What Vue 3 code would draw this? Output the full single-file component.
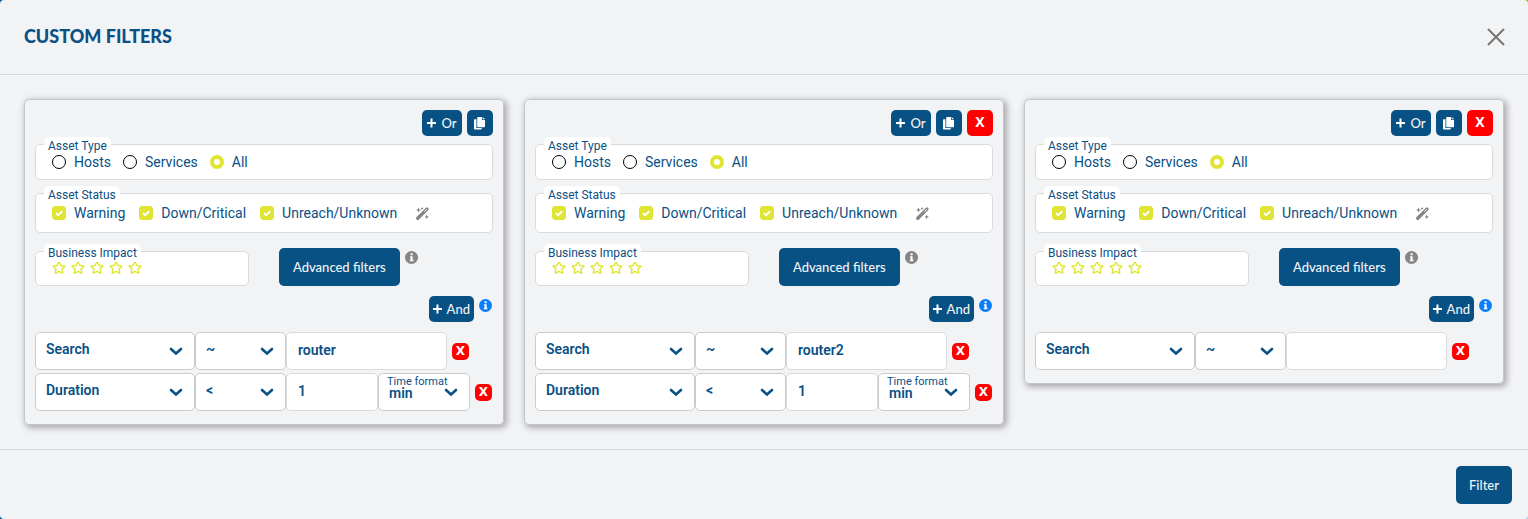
<script setup>
import { reactive } from 'vue'

const makeCard = (id, rows, removable) => ({
  id,
  rows,
  removable,
  assetType: 'All',
  statuses: ['Warning', 'Down/Critical', 'Unreach/Unknown'],
})

const cards = reactive([
  makeCard(1, [
    { field: 'Search', op: '~', value: 'router' },
    { field: 'Duration', op: '<', value: '1', unit: 'min' },
  ], false),
  makeCard(2, [
    { field: 'Search', op: '~', value: 'router2' },
    { field: 'Duration', op: '<', value: '1', unit: 'min' },
  ], true),
  makeCard(3, [{ field: 'Search', op: '~', value: '' }], true),
])

const assetTypes = ['Hosts', 'Services', 'All']
const statuses = ['Warning', 'Down/Critical', 'Unreach/Unknown']
const fields = ['Search', 'Duration']
const operators = ['~', '<', '>', '=']
const units = ['min', 'hour', 'day']

const addRow = (card) => card.rows.push({ field: 'Search', op: '~', value: '' })
</script>

<template>
  <div class="backdrop">
    <section class="modal" role="dialog" aria-labelledby="modal-title">
      <header class="modal-header">
        <h1 id="modal-title">CUSTOM FILTERS</h1>
        <button class="close" type="button" aria-label="Close">
          <svg width="18" height="18" viewBox="0 0 18 18"><path d="M1.5 1.5l15 15M16.5 1.5l-15 15" /></svg>
        </button>
      </header>

      <main class="modal-body">
        <article v-for="card in cards" :key="card.id" class="card">
          <div class="toolbar">
            <button class="btn small" type="button">
              <svg class="plus" width="9" height="10" viewBox="0 0 9 10"><path d="M4.5 0.5v9M0 5h9" /></svg>
              <span>Or</span>
            </button>
            <button class="btn square" type="button" aria-label="Duplicate">
              <svg width="12" height="13" viewBox="0 0 12 13" fill="#fff">
                <path d="M4 0h4v3h3v6.5a.8.8 0 0 1-.8.8H4a.8.8 0 0 1-.8-.8V.8A.8.8 0 0 1 4 0z" />
                <path d="M8.7 0L11 2.3H8.7z" />
                <path d="M.8 2.2h1.6v8.9h5.4v.7a.8.8 0 0 1-.8.8H.8a.8.8 0 0 1-.8-.8V3a.8.8 0 0 1 .8-.8z" />
              </svg>
            </button>
            <button v-if="card.removable" class="btn square danger" type="button">X</button>
          </div>

          <fieldset class="group types">
            <legend>Asset Type</legend>
            <label v-for="type in assetTypes" :key="type" class="choice">
              <input v-model="card.assetType" type="radio" :name="'type-' + card.id" :value="type" />
              <span>{{ type }}</span>
            </label>
          </fieldset>

          <fieldset class="group statuses">
            <legend>Asset Status</legend>
            <label v-for="status in statuses" :key="status" class="choice">
              <span class="tick">
                <input v-model="card.statuses" type="checkbox" :value="status" />
                <svg width="14" height="14" viewBox="0 0 14 14"><path d="M4 7l2.200 2.200L10.200 5.200" /></svg>
              </span>
              <span>{{ status }}</span>
            </label>
            <button class="icon-btn wand" type="button" aria-label="Toggle all">
              <svg width="13" height="13" viewBox="0 0 13 13">
                <path d="M1.800 11.200L10.900 2.100" stroke="#858585" stroke-width="3.400" stroke-linecap="round" />
                <path d="M8.400 4.600L10.700 2.300" stroke="#fff" stroke-width="1" />
                <path d="M2.500.6l.7 1.700 1.700.7-1.700.7-.7 1.700-.7-1.700L.1 3l1.700-.7zM6 0l.5 1 1 .5-1 .5-.5 1-.5-1-1-.5 1-.5zM10.700 7.600l.7 1.600 1.600.7-1.600.7-.7 1.600-.7-1.600-1.600-.7 1.600-.7z" fill="#858585" />
              </svg>
            </button>
          </fieldset>

          <div class="impact-row">
            <fieldset class="group impact">
              <legend>Business Impact</legend>
              <button v-for="n in 5" :key="n" class="icon-btn" type="button" :aria-label="'Impact ' + n">
                <svg width="14" height="13" viewBox="0 0 576 512" fill="#dfe532" stroke="#dfe532" stroke-width="12">
                  <path d="M528.1 171.5L382 150.2 316.7 17.8c-11.7-23.6-45.6-23.9-57.4 0L194 150.2 47.9 171.5c-26.2 3.8-36.7 36.1-17.7 54.6l105.7 103-25 145.5c-4.5 26.3 23.2 46 46.4 33.7L288 439.6l130.7 68.7c23.2 12.2 50.9-7.4 46.4-33.7l-25-145.5 105.7-103c19-18.5 8.5-50.8-17.7-54.6zM388.6 312.3l23.7 138.4L288 385.4l-124.3 65.3 23.7-138.4-100.6-98 139-20.2 62.2-126 62.2 126 139 20.2-100.6 98z" />
                </svg>
              </button>
            </fieldset>
            <button class="btn large" type="button">Advanced filters</button>
            <svg class="info" width="13" height="13" viewBox="0 0 13 13">
              <circle cx="6.500" cy="6.500" r="6.500" fill="#858585" />
              <path d="M5.600 2.300h2v1.900h-2zM5 5.200h2.600v3.600h.8v1.400H4.800V8.800h.8V6.600H5z" fill="#fff" />
            </svg>
          </div>

          <div class="and-row">
            <button class="btn small" type="button" @click="addRow(card)">
              <svg class="plus" width="9" height="10" viewBox="0 0 9 10"><path d="M4.500 0.500v9M0 5h9" /></svg>
              <span>And</span>
            </button>
            <svg class="info" width="13" height="13" viewBox="0 0 13 13">
              <circle cx="6.500" cy="6.500" r="6.500" fill="#0a7dfa" />
              <path d="M5.600 2.300h2v1.900h-2zM5 5.200h2.600v3.600h.8v1.400H4.800V8.800h.8V6.600H5z" fill="#fff" />
            </svg>
          </div>

          <div class="rows">
            <div v-for="(row, i) in card.rows" :key="i" class="row" :class="{ timed: row.unit }">
              <div class="field name">
                <select v-model="row.field" aria-label="Field">
                  <option v-for="f in fields" :key="f">{{ f }}</option>
                </select>
                <svg class="chevron" width="14" height="9" viewBox="0 0 14 9"><path d="M2 2l5 4.500L12 2" /></svg>
              </div>
              <div class="field operator">
                <select v-model="row.op" aria-label="Operator">
                  <option v-for="o in operators" :key="o">{{ o }}</option>
                </select>
                <svg class="chevron" width="14" height="9" viewBox="0 0 14 9"><path d="M2 2l5 4.500L12 2" /></svg>
              </div>
              <div class="field value">
                <input v-model="row.value" type="text" aria-label="Value" />
              </div>
              <div v-if="row.unit" class="field unit">
                <label :for="'unit-' + card.id + '-' + i">Time format</label>
                <select :id="'unit-' + card.id + '-' + i" v-model="row.unit">
                  <option v-for="u in units" :key="u">{{ u }}</option>
                </select>
                <svg class="chevron" width="14" height="9" viewBox="0 0 14 9"><path d="M2 2l5 4.500L12 2" /></svg>
              </div>
              <button class="remove" type="button">X</button>
            </div>
          </div>
        </article>
      </main>

      <footer class="modal-footer">
        <button class="btn large" type="button">Filter</button>
      </footer>
    </section>
  </div>
</template>

<style>
body {
  background: #f2f3f5;
}
</style>

<style scoped>
* {
  box-sizing: border-box;
}
.backdrop {
  background:
    linear-gradient(#9db53c 50%, #a9cbe2 50%) right / 50% 100% no-repeat,
    #00508a;
}
.modal {
  background: #f2f3f5;
  border-radius: 4px;
  color: #0a5085;
  font: 14px/18px Roboto, sans-serif;
}
button,
input,
select {
  font: inherit;
  color: inherit;
  margin: 0;
}
button {
  border: 0;
  padding: 0;
  cursor: pointer;
}
svg {
  display: block;
  flex: none;
}
.modal-header {
  display: flex;
  align-items: center;
  justify-content: space-between;
  height: 75px;
  padding: 0 24px;
  border-bottom: 1px solid #d6d7d9;
}
h1 {
  margin: 0;
  padding-bottom: 2px;
  font: 900 18px/24px Lato, sans-serif;
}
.close {
  background: none;
  margin-right: -1px;
}
.close path {
  stroke: #757575;
  stroke-width: 2;
  stroke-linecap: round;
}
.modal-body {
  display: grid;
  grid-template-columns: repeat(3, 1fr);
  align-items: start;
  gap: 20px;
  padding: 24px;
}
.card {
  padding: 10px 10px 13px;
  border: 1px solid #c3c5c7;
  border-radius: 5px;
  box-shadow: 2px 2px 6px 1px rgba(0, 0, 0, 0.3);
}
.toolbar {
  display: flex;
  justify-content: flex-end;
  gap: 5px;
}
.btn {
  display: inline-flex;
  align-items: center;
  justify-content: center;
  flex: none;
  gap: 5px;
  background: #085184;
  color: #f2f3f5;
  border-radius: 5px;
  font: 500 13px/18px Lato, sans-serif;
}
.btn.small {
  min-width: 40px;
  height: 26px;
  padding: 0 4px;
}
.btn.square {
  width: 26px;
  height: 26px;
}
.btn.danger {
  padding-bottom: 2px;
  background: #fe0000;
  color: #fff;
  font: 700 14px/18px "Noto Sans", sans-serif;
}
.btn.large {
  min-width: 56px;
  height: 38px;
  padding: 0 14px;
}
.modal-footer .btn.large {
  padding: 0 12px;
}
.plus path {
  stroke: #fff;
  stroke-width: 2;
}
.group {
  position: relative;
  display: flex;
  align-items: center;
  min-width: 0;
  margin: 0;
  padding: 0 16px;
  background: #fff;
  border: 1px solid #d9dadc;
  border-radius: 5px;
}
legend {
  position: absolute;
  top: -8px;
  left: 8px;
  padding: 0 4px;
  background: #fff;
  border-radius: 5px;
  font-size: 12px;
  line-height: 18px;
}
.types {
  height: 36px;
  margin-top: 8px;
  gap: 12px;
}
.statuses {
  height: 40px;
  margin-top: 13px;
  gap: 14px;
}
.choice {
  display: flex;
  align-items: center;
  gap: 8px;
}
.choice input {
  appearance: none;
  display: block;
  width: 14px;
  height: 14px;
}
.choice input[type='radio'] {
  border: 1px solid #000;
  border-radius: 50%;
}
.choice input[type='radio']:checked {
  border: 4px solid #dfe532;
}
.tick {
  position: relative;
}
.tick input {
  border-radius: 3px;
  border: 1px solid #dfe532;
}
.tick input:checked {
  background: #dfe532;
}
.tick svg {
  position: absolute;
  inset: 0;
  fill: none;
  stroke: #fff;
  stroke-width: 2;
  pointer-events: none;
}
.icon-btn {
  background: none;
}
.wand {
  margin-left: 5px;
}
.impact-row {
  display: flex;
  align-items: flex-start;
  margin-top: 15px;
}
.impact {
  width: 214px;
  height: 35px;
  margin: 3px 30px 0 0;
  padding-bottom: 2px;
  gap: 5px;
}
.impact-row .info {
  margin: 3px 0 0 5px;
}
.and-row {
  display: flex;
  justify-content: flex-end;
  gap: 5px;
  margin-top: 10px;
  padding-right: 1px;
}
.and-row .info {
  margin-top: 3px;
}
.rows {
  display: grid;
  gap: 3px;
  margin-top: 10px;
}
.row {
  display: flex;
  align-items: center;
  padding-right: 24px;
}
.row.timed {
  padding-right: 1px;
}
.field {
  position: relative;
  min-width: 0;
  height: 38px;
}
.name {
  flex: 160 1 0;
}
.operator {
  flex: 91 1 0;
}
.value {
  flex: 161 1 0;
}
.timed .value,
.unit {
  flex: 92 1 0;
}
.field select,
.field input {
  appearance: none;
  display: block;
  width: 100%;
  height: 100%;
  background: #fff;
  border: 1px solid #c9cbcd;
  border-radius: 5px;
  padding: 0 10px 4px;
  font-weight: 600;
}
.field input {
  border-color: #d9dadc;
  padding: 0 11px 2px;
}
.field.unit select {
  padding: 2px 10px 0;
}
.unit label {
  position: absolute;
  top: 2px;
  left: 9px;
  font-size: 11px;
  line-height: 14px;
}
.chevron {
  position: absolute;
  right: 12px;
  top: 15px;
  fill: none;
  stroke: #085184;
  stroke-width: 2.6;
  stroke-linecap: round;
  pointer-events: none;
}
.remove {
  flex: none;
  width: 17px;
  height: 17px;
  margin-left: 5px;
  background: #fe0000;
  color: #fff;
  border-radius: 5px;
  font: 700 12px/16px "DejaVu Sans", sans-serif;
}
.modal-footer {
  display: flex;
  justify-content: flex-end;
  padding: 16px 16px 15px;
  border-top: 1px solid #d6d7d9;
}
</style>
